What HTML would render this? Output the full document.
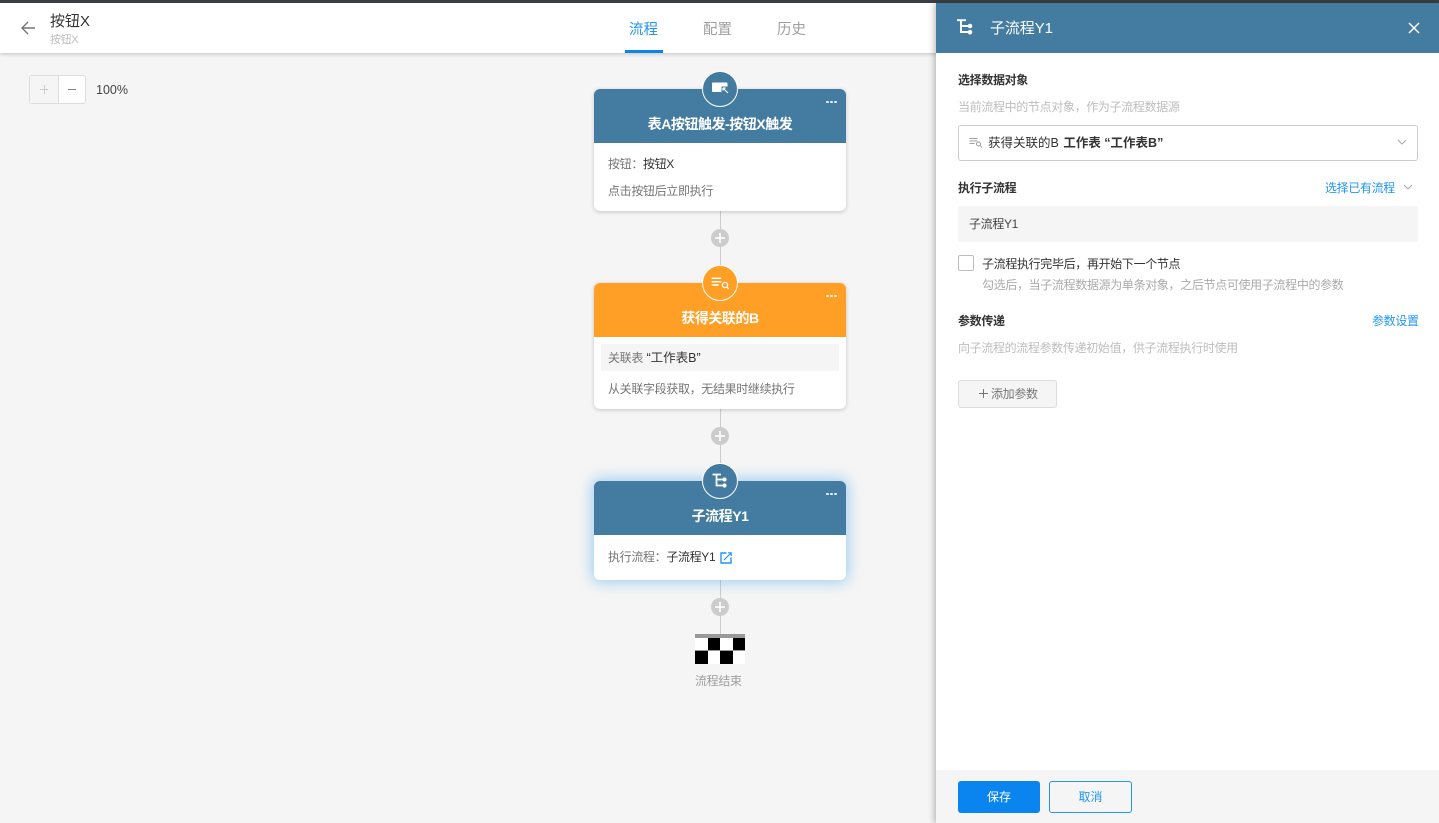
<!DOCTYPE html>
<html lang="zh"><head><meta charset="utf-8"><title>子流程</title>
<style>
*{box-sizing:border-box}
html,body{margin:0;padding:0}
body{width:1439px;height:823px;overflow:hidden;position:relative;background:#f5f5f5;font-family:"Liberation Sans","Noto Sans CJK SC",sans-serif;font-size:12px;color:#333}
.a{position:absolute;white-space:nowrap}
.t{position:absolute;white-space:nowrap;line-height:18px;height:18px;letter-spacing:-.34px}
.card{position:absolute;left:594px;width:252px;background:#fff;border-radius:6px;box-shadow:0 1px 4px rgba(0,0,0,.2)}
.hd{position:absolute;left:0;top:0;width:252px;height:54px;border-radius:6px 6px 0 0;color:#fff;font-size:14px;font-weight:700;text-align:center;line-height:20px;padding-top:25px;letter-spacing:-.45px}
.blue{background:#437ca0}.org{background:#ff9f26}
.dots{position:absolute;left:232px;top:11.500px;width:11px;height:3px}
.dots i{position:absolute;top:0;width:2.500px;height:2.500px;border-radius:50%;background:rgba(255,255,255,.9)}
.circ{position:absolute;left:702px;width:36px;height:36px;border-radius:50%;border:1px solid #fff}
.line{position:absolute;left:720px;width:1px;background:#ccc}
.plus{position:absolute;left:711px;width:18px;height:18px;border-radius:50%;background:#ccc}
.plus:before{content:"";position:absolute;left:4px;top:8px;width:10px;height:2px;background:rgba(255,255,255,.8)}
.plus:after{content:"";position:absolute;left:8px;top:4px;width:2px;height:10px;background:rgba(255,255,255,.8)}
.g{color:#757575}.l{color:#bdbdbd}
.b{font-weight:700;color:#333}
</style></head><body>

<!-- top header -->
<div class="a" style="left:0;top:0;width:1439px;height:53px;background:#fff;box-shadow:0 1px 4px rgba(0,0,0,.22)"></div>
<div class="a" style="left:0;top:0;width:1439px;height:3px;background:#3b3f45"></div>
<svg class="a" style="left:19.500px;top:20px" width="16" height="16" viewBox="0 0 16 16"><path d="M15 8H2M8 2L2 8l6 6" fill="none" stroke="#757575" stroke-width="1.400"/></svg>
<div class="a" style="left:50px;top:12px;font-size:15px;line-height:20px;color:#333">按钮X</div>
<div class="a l" style="left:50px;top:32px;font-size:11px;line-height:16px;letter-spacing:-.4px">按钮X</div>
<div class="a" style="left:629px;top:20px;font-size:14.500px;line-height:20px;color:#2196f3">流程</div>
<div class="a" style="left:625px;top:50px;width:38px;height:3px;background:#0a84ee"></div>
<div class="a" style="left:703px;top:20px;font-size:14.500px;line-height:20px;color:#9e9e9e">配置</div>
<div class="a" style="left:777px;top:20px;font-size:14.500px;line-height:20px;color:#9e9e9e">历史</div>

<!-- zoom -->
<div class="a" style="left:29px;top:75px;width:57px;height:29px;background:#fff;border:1px solid #ddd;border-radius:3px"></div>
<div class="a" style="left:30px;top:76px;width:29px;height:27px;background:#f5f5f5;border-right:1px solid #ddd"></div>
<div class="a" style="left:40px;top:89px;width:8px;height:1px;background:#ccc"></div>
<div class="a" style="left:44px;top:85px;width:1px;height:9px;background:#ccc"></div>
<div class="a" style="left:68px;top:89px;width:8px;height:1px;background:#888"></div>
<div class="t" style="left:96px;top:81px;font-size:12.500px;color:#444;letter-spacing:0">100%</div>

<!-- connectors -->
<div class="line" style="top:205px;height:80px"></div>
<div class="line" style="top:405px;height:80px"></div>
<div class="line" style="top:575px;height:60px"></div>
<div class="plus" style="top:229px"></div>
<div class="plus" style="top:427px"></div>
<div class="plus" style="top:598px"></div>

<!-- card 1 -->
<div class="card" style="top:89px;height:122px">
  <div class="hd blue">表A按钮触发-按钮X触发</div>
  <div class="dots"><i style="left:0"></i><i style="left:4px"></i><i style="left:8px"></i></div>
  <div class="t g" style="left:14px;top:66px">按钮：<span style="color:#333">按钮X</span></div>
  <div class="t g" style="left:14px;top:93px">点击按钮后立即执行</div>
</div>
<div class="circ blue" style="top:71px"></div>
<svg class="a" style="left:711px;top:80px" width="18" height="16" viewBox="0 0 18 16"><path d="M2 2.500h13.500a1 1 0 0 1 1 1V6.500H10.500V12H2a1 1 0 0 1-1-1V3.500a1 1 0 0 1 1-1z" fill="#fff"/><path d="M12 8v2.500M12 8h2.500M12.300 8.300L17 13" fill="none" stroke="#fff" stroke-width="1.200"/></svg>

<!-- card 2 -->
<div class="card" style="top:283px;height:126px">
  <div class="hd org">获得关联的B</div>
  <div class="dots"><i style="left:0"></i><i style="left:4px"></i><i style="left:8px"></i></div>
  <div class="a" style="left:7px;top:61px;width:238px;height:27px;background:#f5f5f5"></div>
  <div class="t g" style="left:14px;top:66px">关联表</div>
  <div class="t" style="left:52.500px;top:66px;letter-spacing:0;color:#333;font-size:12.500px">“工作表B”</div>
  <div class="t g" style="left:14px;top:97px">从关联字段获取，无结果时继续执行</div>
</div>
<div class="circ org" style="top:265px"></div>
<svg class="a" style="left:711px;top:275px" width="18" height="16" viewBox="0 0 18 16"><path d="M0.700 3.300h9.500M0.700 6.700h9.500M0.700 10h7" stroke="#fff" stroke-width="1.500" fill="none"/><circle cx="14" cy="10" r="2.600" stroke="#fff" stroke-width="1.300" fill="none"/><path d="M15.800 12l1.900 1.900" stroke="#fff" stroke-width="1.500"/></svg>

<!-- card 3 -->
<div class="card" style="top:481px;height:99px;box-shadow:0 0 14px 2px rgba(33,150,243,.42)">
  <div class="hd blue">子流程Y1</div>
  <div class="dots"><i style="left:0"></i><i style="left:4px"></i><i style="left:8px"></i></div>
  <div class="t g" style="left:14px;top:67px">执行流程：<span style="color:#333">子流程Y1</span></div>
  <svg class="a" style="left:126px;top:70.500px" width="12" height="12" viewBox="0 0 12 12"><path d="M6.500 1H1v10h10V5.500" fill="none" stroke="#2196f3" stroke-width="1.400"/><path d="M4 8L10.500 1.500M8 .8h3.200V4" fill="none" stroke="#2196f3" stroke-width="1.200"/></svg>
</div>
<div class="circ blue" style="top:463px"></div>
<svg class="a" style="left:711px;top:472px" width="18" height="18" viewBox="0 0 18 18"><path d="M1.500 2.500H10M5.500 2.500V13.500H13M5.500 7.500H13" fill="none" stroke="#fff" stroke-width="1.700"/><circle cx="13.500" cy="7.500" r="2.100" fill="#fff"/><circle cx="13.500" cy="13.500" r="2.100" fill="#fff"/></svg>

<!-- finish flag -->
<div class="a" style="left:695px;top:634px;width:50px;height:30px;background:#999"></div>
<div class="a" style="left:695px;top:638px;width:50px;height:12px;background:#fff"></div>
<div class="a" style="left:707.500px;top:638px;width:12.500px;height:12px;background:#000"></div>
<div class="a" style="left:732.500px;top:638px;width:12.500px;height:12px;background:#000"></div>
<div class="a" style="left:695px;top:651px;width:50px;height:13px;background:#fff"></div>
<div class="a" style="left:695px;top:651px;width:12.500px;height:13px;background:#000"></div>
<div class="a" style="left:720px;top:651px;width:12.500px;height:13px;background:#000"></div>
<div class="t" style="left:695px;top:672px;color:#9e9e9e">流程结束</div>

<!-- side panel -->
<div class="a" style="left:936px;top:3px;width:503px;height:820px;background:#fff;box-shadow:-2px 0 6px rgba(0,0,0,.25)"></div>
<div class="a blue" style="left:936px;top:3px;width:503px;height:50px"></div>
<svg class="a" style="left:956px;top:18px" width="18" height="18" viewBox="0 0 18 18"><path d="M1 2.200h9M5 2.200V14H13M5 8H13" fill="none" stroke="#fff" stroke-width="1.900"/><circle cx="14" cy="8" r="2.300" fill="#fff"/><circle cx="14" cy="14.200" r="2.300" fill="#fff"/></svg>
<div class="a" style="left:990px;top:18px;font-size:15px;line-height:22px;color:#fff;letter-spacing:-.1px">子流程Y1</div>
<svg class="a" style="left:1408px;top:22px" width="12" height="12" viewBox="0 0 12 12"><path d="M1 1l10 10M11 1L1 11" stroke="#fff" stroke-width="1.500" fill="none"/></svg>

<div class="t b" style="left:958px;top:71px">选择数据对象</div>
<div class="t l" style="left:958px;top:98px">当前流程中的节点对象，作为子流程数据源</div>
<div class="a" style="left:958px;top:125px;width:460px;height:36px;border:1px solid #ccc;border-radius:3px"></div>
<svg class="a" style="left:969px;top:137px" width="14" height="11" viewBox="0 0 14 11"><path d="M0.500 1.500h8M0.500 4h8M0.500 6.500h5" stroke="#9e9e9e" stroke-width="1" fill="none"/><circle cx="9.500" cy="7" r="2" stroke="#9e9e9e" fill="none"/><path d="M11 8.500l2 2" stroke="#9e9e9e"/></svg>
<div class="t" style="left:988px;top:134px;color:#333;font-size:12.500px;letter-spacing:0">获得关联的B&nbsp;<b style="margin-left:1px">工作表 “工作表B”</b></div>
<svg class="a" style="left:1397px;top:139px" width="10" height="7" viewBox="0 0 10 7"><path d="M1 1l4 4 4-4" fill="none" stroke="#aaa" stroke-width="1.100"/></svg>

<div class="t b" style="left:958px;top:179px">执行子流程</div>
<div class="t" style="left:1325px;top:179px;color:#2196f3">选择已有流程</div>
<svg class="a" style="left:1403px;top:184px" width="10" height="7" viewBox="0 0 10 7"><path d="M1 1l4 4 4-4" fill="none" stroke="#aaa" stroke-width="1.100"/></svg>
<div class="a" style="left:958px;top:206px;width:460px;height:36px;background:#f5f5f5;border-radius:2px"></div>
<div class="t" style="left:969px;top:215px;color:#444">子流程Y1</div>

<div class="a" style="left:958px;top:255px;width:16px;height:16px;border:1px solid #bdbdbd;border-radius:2px"></div>
<div class="t" style="left:982px;top:255px;color:#333">子流程执行完毕后，再开始下一个节点</div>
<div class="t l" style="left:982px;top:276px;color:#aaa">勾选后，当子流程数据源为单条对象，之后节点可使用子流程中的参数</div>

<div class="t b" style="left:958px;top:312px">参数传递</div>
<div class="t" style="left:1372px;top:312px;color:#2196f3">参数设置</div>
<div class="t l" style="left:958px;top:339px">向子流程的流程参数传递初始值，供子流程执行时使用</div>

<div class="a" style="left:958px;top:380px;width:99px;height:28px;background:#f5f5f5;border:1px solid #ddd;border-radius:3px"></div>
<div class="a" style="left:979px;top:393px;width:9px;height:1px;background:#757575"></div>
<div class="a" style="left:983px;top:389px;width:1px;height:9px;background:#757575"></div>
<div class="t g" style="left:991px;top:385px">添加参数</div>

<!-- footer -->
<div class="a" style="left:936px;top:770px;width:503px;height:53px;background:#f5f5f5"></div>
<div class="a" style="left:958px;top:781px;width:82px;height:32px;background:#0a84ee;border-radius:3px;color:#fff;text-align:center;line-height:32px">保存</div>
<div class="a" style="left:1049px;top:781px;width:83px;height:32px;border:1px solid #2196f3;border-radius:3px;color:#2196f3;text-align:center;line-height:30px">取消</div>

</body></html>
